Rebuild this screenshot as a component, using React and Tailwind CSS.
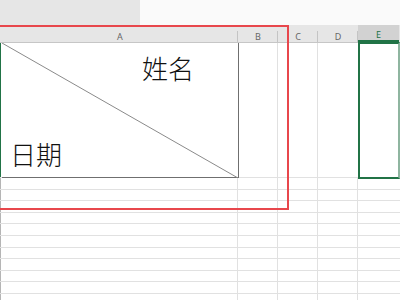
import React from 'react';

const cols = [
  { key: 'A', w: 'w-[236px]' },
  { key: 'B', w: 'w-[40px]' },
  { key: 'C', w: 'w-[40px]' },
  { key: 'D', w: 'w-[40px]' },
  { key: 'E', w: 'w-[41px]' },
];

function HeaderRow() {
  return (
    <div className="flex h-[18px] bg-[#e6e6e6] border-b border-[#c6c6c6]">
      <div className="w-[2px] shrink-0" />
      {cols.map((c, i) => (
        <div
          key={c.key}
          className={
            (c.key === 'E'
              ? 'bg-[#d2d2d2] text-[#217346] border-b-2 border-[#217346] '
              : 'text-[#666666] ') +
            c.w +
            ' shrink-0 flex items-end justify-center pb-[1px] text-[9px] leading-none relative'
          }
        >
          {c.key}
          {i < cols.length - 1 && (
            <span className="absolute right-0 bottom-0 h-[11px] w-px bg-[#c4c4c4]" />
          )}
        </div>
      ))}
    </div>
  );
}

function TitleRow() {
  return (
    <div className="flex h-[135px] border-b border-[#e1e1e1]">
      <div className="w-[2px] shrink-0 border-l border-[#217346]" />
      {/* diagonal header cell */}
      <div className="w-[237px] shrink-0 relative border-r border-b border-[#6f6f6f] -mb-px">
        <svg className="absolute inset-0" width="236" height="135" viewBox="0 0 236 135">
          <line x1="0" y1="0" x2="236" y2="135" stroke="#8a8a8a" strokeWidth="1" />
        </svg>
        <div className="absolute left-[140px] top-[13px] text-[26px] font-light leading-none text-[#111]">
          姓名
        </div>
        <div className="absolute left-[8px] top-[99px] text-[26px] font-light leading-none text-[#111]">
          日期
        </div>
      </div>
      <div className="w-[39px] shrink-0 border-r border-[#e1e1e1]" />
      <div className="w-[40px] shrink-0 border-r border-[#e1e1e1]" />
      <div className="w-[40px] shrink-0" />
      <div className="w-[41px] shrink-0" />
    </div>
  );
}

function GridRow() {
  return (
    <div className="flex h-[11.6px] border-b border-[#e1e1e1]">
      <div className="w-[2px] shrink-0 border-l border-[#b5b5b5]" />
      <div className="w-[236px] shrink-0 border-r border-[#e1e1e1]" />
      <div className="w-[40px] shrink-0 border-r border-[#e1e1e1]" />
      <div className="w-[40px] shrink-0 border-r border-[#e1e1e1]" />
      <div className="w-[40px] shrink-0 border-r border-[#e1e1e1]" />
      <div className="w-[41px] shrink-0" />
    </div>
  );
}

export default function App() {
  return (
    <div
      className="relative w-[400px] h-[300px] overflow-hidden bg-white"
      style={{ fontFamily: '"Noto Sans", "Noto Sans CJK SC", sans-serif' }}
    >
      {/* ribbon strip */}
      <div className="flex h-[25px]">
        <div className="w-[140px] bg-[#e6e6e6]" />
        <div className="flex-1 bg-[#fafafa]" />
      </div>

      <HeaderRow />
      <TitleRow />
      {Array.from({ length: 11 }).map((_, i) => (
        <GridRow key={i} />
      ))}

      {/* selected cell E1 */}
      <div className="absolute left-[358px] top-[42px] w-[42px] h-[137px] border-2 border-[#217346] border-r-[#8fb5a0]" />

      {/* red highlight box */}
      <div className="absolute left-[-10px] top-[25px] w-[299px] h-[185px] border-2 border-[#e8474c]" />
    </div>
  );
}
